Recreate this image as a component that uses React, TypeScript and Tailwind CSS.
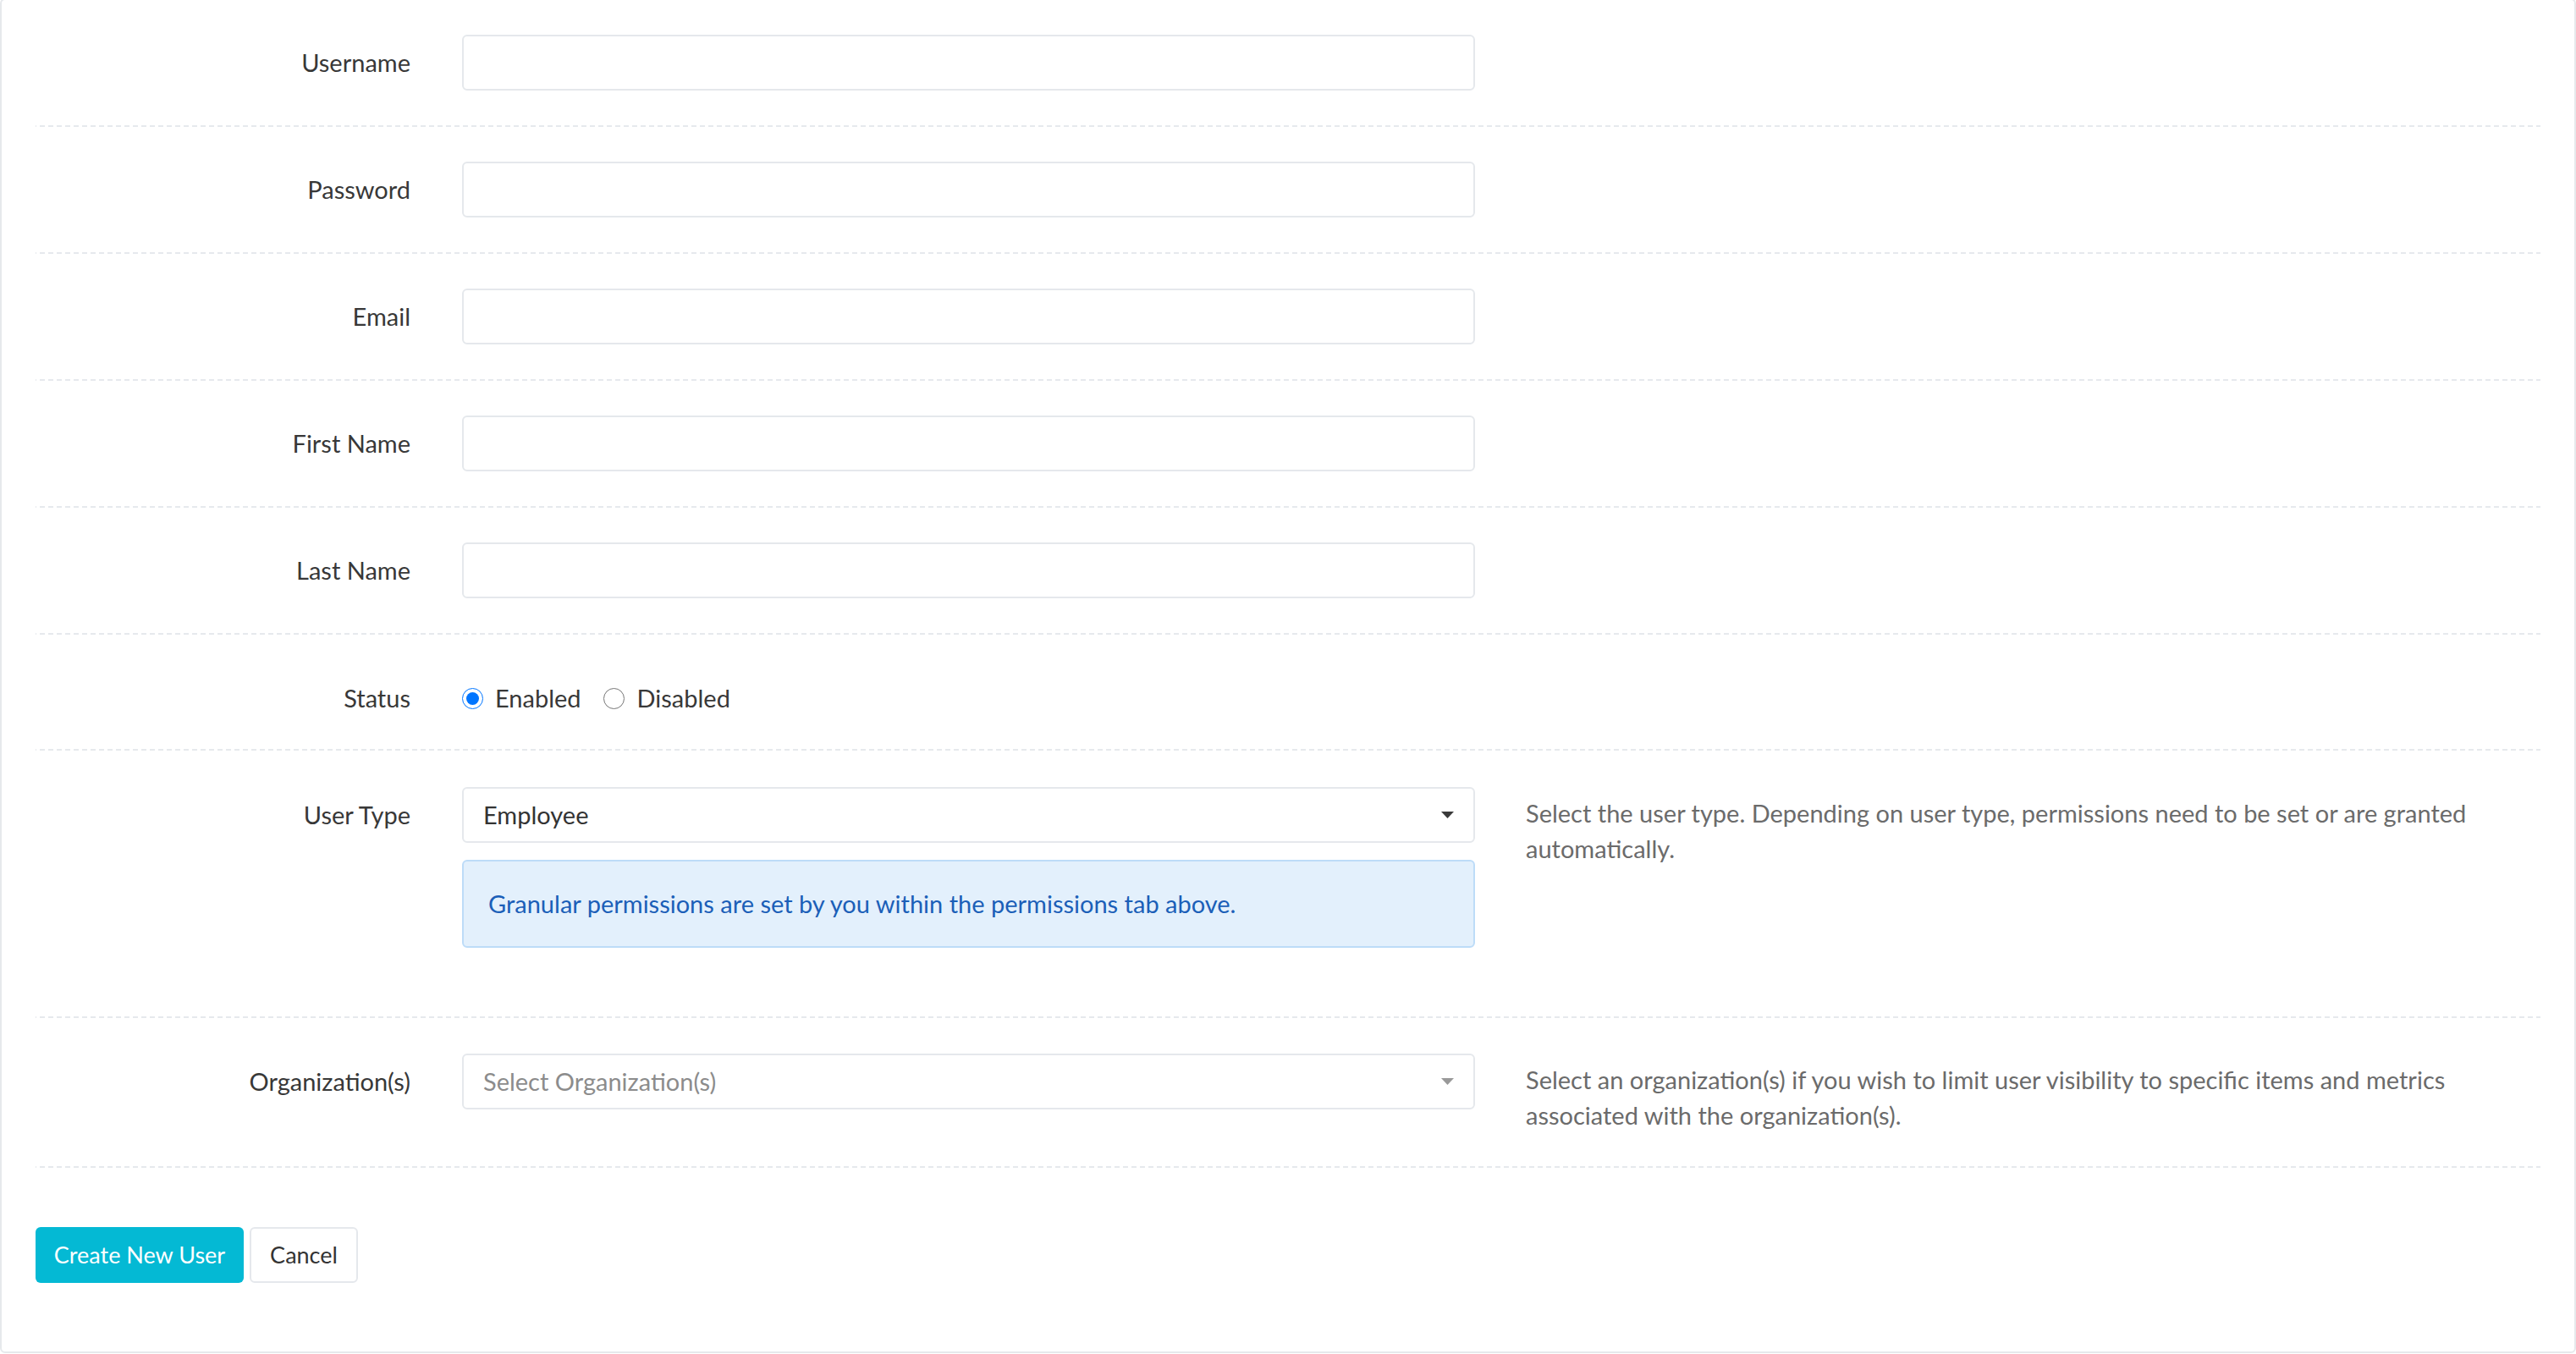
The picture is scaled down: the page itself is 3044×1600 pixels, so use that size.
import { useState } from "react";

type Field = {
  label: string;
  type: string;
};

const TEXT_FIELDS: Field[] = [
  { label: "Username", type: "text" },
  { label: "Password", type: "password" },
  { label: "Email", type: "email" },
  { label: "First Name", type: "text" },
  { label: "Last Name", type: "text" },
];

// dashed separator under each form row
const dashed =
  "bg-[linear-gradient(to_right,#e6e9ed_6px,transparent_6px)] bg-[length:10px_2px] bg-repeat-x bg-bottom";

function Caret({ color }: { color: string }) {
  return (
    <svg width="15" height="8" viewBox="0 0 15 8" className="shrink-0">
      <polygon points="0,0 15,0 7.5,8" fill={color} />
    </svg>
  );
}

function Label({ text, h }: { text: string; h: string }) {
  return (
    <div
      className={`w-[443px] shrink-0 flex items-center justify-end text-[#383838] ${h}`}
    >
      {text}
    </div>
  );
}

export default function App() {
  const [status, setStatus] = useState("enabled");
  const [userType] = useState("Employee");

  return (
    <div className="min-h-screen bg-white font-['Lato',sans-serif] text-[29px]">
      <div className="-mt-[2px] border-2 border-[#e6e9ec] rounded-[6px] bg-white px-[40px] pb-[81px]">
        {TEXT_FIELDS.map((f) => (
          <div key={f.label} className={`flex pt-[41px] pb-[43px] ${dashed}`}>
            <Label text={f.label} h="h-[66px]" />
            <div className="ml-[61px] w-[1197px] shrink-0">
              <input
                type={f.type}
                aria-label={f.label}
                className="block w-full h-[66px] border-2 border-[#e5e8ec] rounded-[6px] px-[23px] outline-none text-[#333]"
              />
            </div>
          </div>
        ))}

        {/* Status */}
        <div className={`flex pt-[55px] pb-[42px] ${dashed}`}>
          <Label text="Status" h="h-[40px]" />
          <div className="ml-[61px] h-[40px] flex items-center text-[#383838]">
            <label className="flex items-center">
              <input
                type="radio"
                name="status"
                checked={status === "enabled"}
                onChange={() => setStatus("enabled")}
                className="m-0 w-[25px] h-[25px]"
              />
              <span className="ml-[14px]">Enabled</span>
            </label>
            <label className="flex items-center ml-[26px]">
              <input
                type="radio"
                name="status"
                checked={status === "disabled"}
                onChange={() => setStatus("disabled")}
                className="m-0 w-[25px] h-[25px]"
              />
              <span className="ml-[15px]">Disabled</span>
            </label>
          </div>
        </div>

        {/* User Type */}
        <div className={`flex items-start pt-[43px] pb-[43px] ${dashed}`}>
          <Label text="User Type" h="h-[66px]" />
          <div className="ml-[61px] w-[1197px] shrink-0">
            <div className="h-[66px] border-2 border-[#e5e8ec] rounded-[6px] pl-[23px] pr-[23px] flex items-center justify-between text-[#333]">
              <span>{userType}</span>
              <Caret color="#3a3a3a" />
            </div>
            <div className="mt-[20px] mb-[40px] h-[104px] border-2 border-[#bddcf8] bg-[#e3f0fc] rounded-[6px] px-[29px] flex items-center text-[#1b5fb8]">
              Granular permissions are set by you within the permissions tab above.
            </div>
          </div>
          <p className="ml-[60px] w-[1160px] pt-[10px] leading-[42px] text-[#6b6b6b]">
            Select the user type. Depending on user type, permissions need to be set or are
            granted automatically.
          </p>
        </div>

        {/* Organization(s) */}
        <div className={`flex items-start pt-[42px] pb-[41px] ${dashed}`}>
          <Label text="Organization(s)" h="h-[66px]" />
          <div className="ml-[61px] w-[1197px] shrink-0">
            <div className="h-[66px] border-2 border-[#e5e8ec] rounded-[6px] pl-[23px] pr-[23px] flex items-center justify-between text-[#8c8c8c]">
              <span>Select Organization(s)</span>
              <Caret color="#999999" />
            </div>
          </div>
          <p className="ml-[60px] w-[1160px] pt-[10px] leading-[42px] text-[#6b6b6b]">
            Select an organization(s) if you wish to limit user visibility to specific items and
            metrics associated with the organization(s).
          </p>
        </div>

        <div className="flex pt-[70px]">
          <button className="h-[66px] w-[246px] rounded-[6px] bg-[#04b9d4] text-white text-[27px]">
            Create New User
          </button>
          <button className="ml-[7px] h-[66px] w-[128px] rounded-[6px] border-2 border-[#e5e8ec] bg-white text-[#333] text-[27px]">
            Cancel
          </button>
        </div>
      </div>
    </div>
  );
}
